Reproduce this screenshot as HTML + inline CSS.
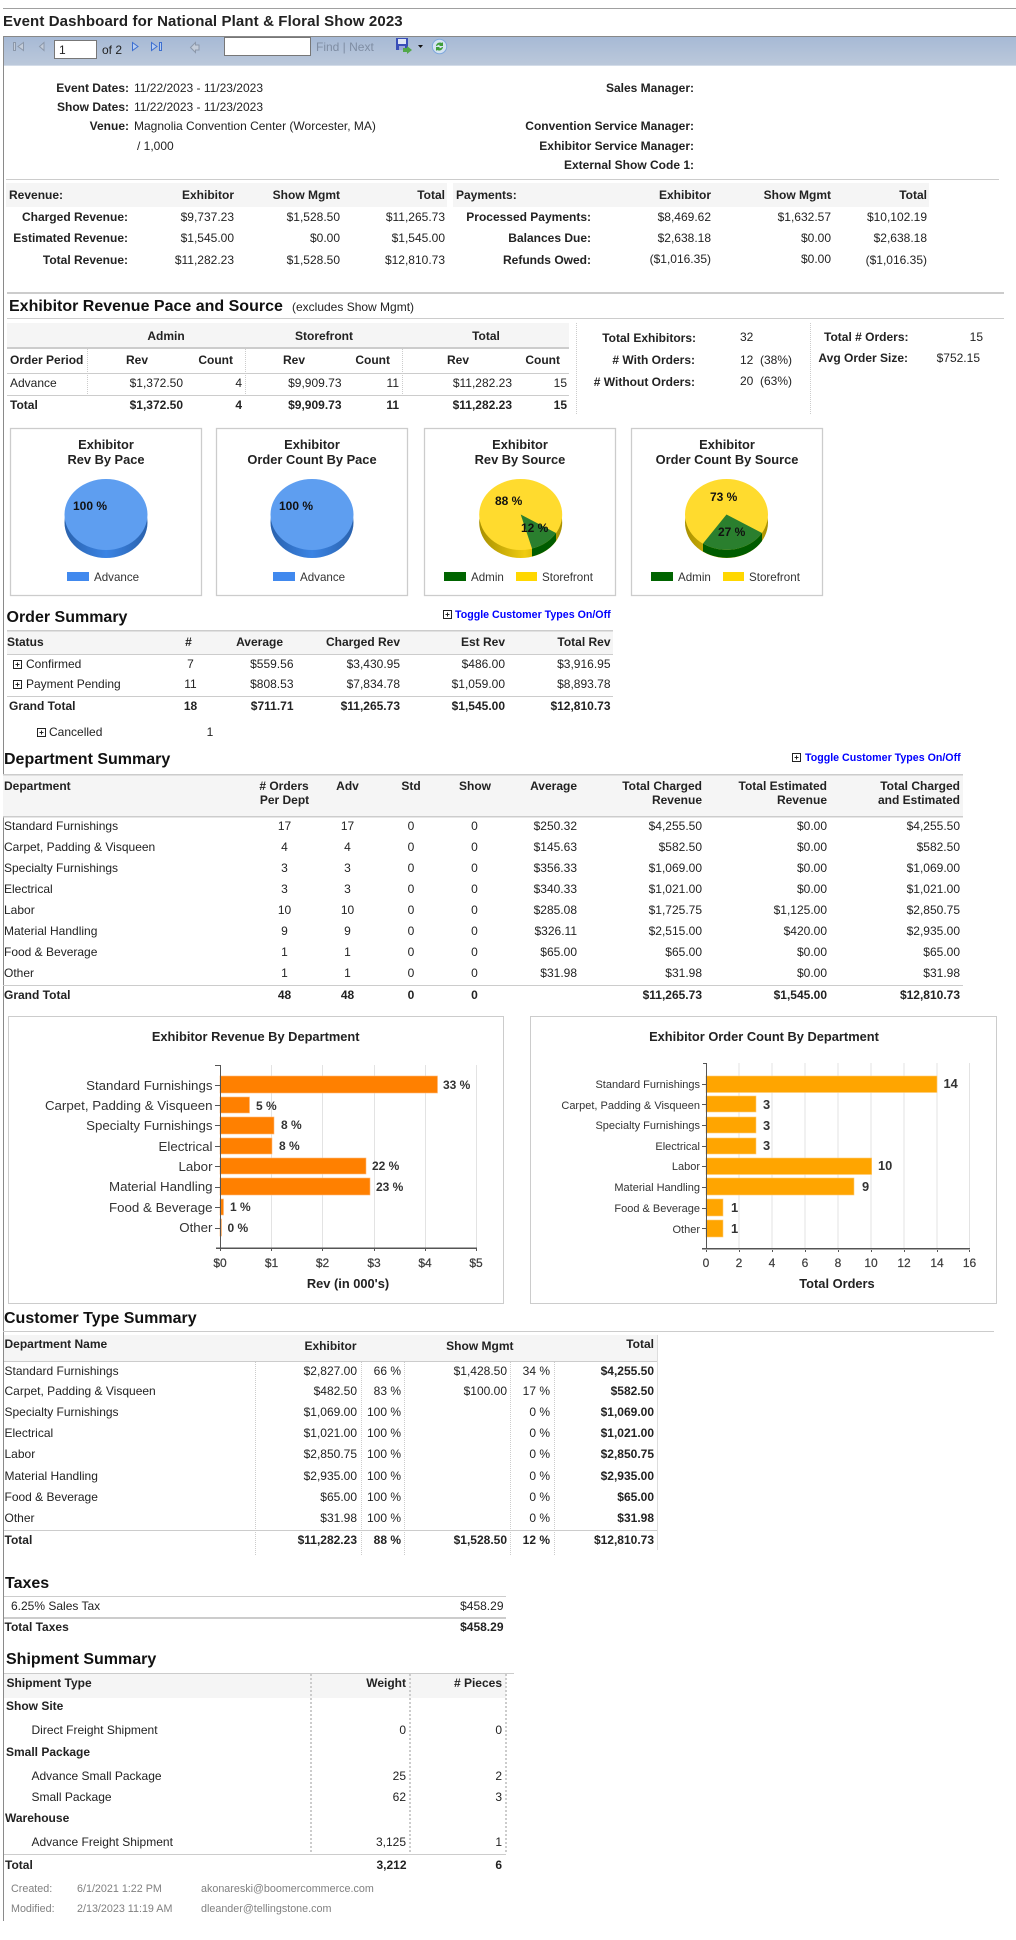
<!DOCTYPE html>
<html><head><meta charset="utf-8"><title>Event Dashboard</title>
<style>
html,body{margin:0;padding:0;background:#fff}
svg{display:block;font-family:"Liberation Sans",Arial,sans-serif;font-size:12px;fill:#222;filter:blur(.25px)}
.b{font-weight:bold}
.h{font-weight:bold;font-size:16px;fill:#111}
.e{text-anchor:end}
.m{text-anchor:middle}
.ct{font-weight:bold;font-size:12.85px;fill:#222}
.lnk{font-weight:bold;font-size:10.65px;fill:#0000ff}
.f{font-size:10.75px;fill:#808080}
.sm{font-size:11px;fill:#333}
.lb{font-size:13.3px;fill:#333}
.lg{fill:#333;font-size:11.6px}
.tk{fill:#3c3c3c;stroke:#3c3c3c;stroke-width:.2px}
.dot{stroke:#ccc;stroke-width:1;stroke-dasharray:1 1;fill:none}
.dot2{stroke:#ccc;stroke-width:2;stroke-dasharray:2 2;fill:none}
.grid{stroke:#e3e3e3;stroke-width:1}
.ax{stroke:#555;stroke-width:1;fill:none}
</style></head><body>
<svg width="1016" height="1940" viewBox="0 0 1016 1940" xmlns="http://www.w3.org/2000/svg">
<defs>
<linearGradient id="tb" x1="0" y1="0" x2="0" y2="1"><stop offset="0" stop-color="#a6b9d5"/><stop offset="1" stop-color="#bcc9db"/></linearGradient>
<linearGradient id="sb" x1="0" y1="0" x2="1" y2="0"><stop offset="0" stop-color="#2a62ad"/><stop offset=".5" stop-color="#3b84e4"/><stop offset="1" stop-color="#2a62ad"/></linearGradient>
<linearGradient id="sy" x1="0" y1="0" x2="1" y2="0"><stop offset="0" stop-color="#a89000"/><stop offset=".55" stop-color="#f0cc10"/><stop offset="1" stop-color="#a89000"/></linearGradient>
</defs>
<rect x="3" y="8" width="1013" height="1" fill="#a0a0a0"/>
<text x="3" y="26" class="b" style="font-size:15px;letter-spacing:.12px" fill="#222">Event Dashboard for National Plant &amp; Floral Show 2023</text>

<!-- toolbar -->
<rect x="3" y="36" width="1013" height="30" fill="url(#tb)"/>
<rect x="3" y="36" width="1013" height="1" fill="#888"/>
<rect x="3" y="65" width="1013" height="1" fill="#d3dce8"/>
<rect x="3" y="36" width="1" height="1885" fill="#8a8a8a"/>
<g fill="#c3ccd9" stroke="#8c98aa" stroke-width="1">
<rect x="13.500" y="42.500" width="2" height="8"/><path d="M23.500 42.500 18 46.500 23.500 50.500Z"/>
<path d="M44 42.500 39.500 46.500 44 50.500Z"/>
<path d="M195.500 42.500 190.500 47.500 195.500 52.500V50H199V45H195.500Z"/>
</g>
<g fill="#b9cff0" stroke="#3d6fd0" stroke-width="1">
<path d="M132.500 42.500 138 46.500 132.500 50.500Z"/><path d="M151.500 42.500 157 46.500 151.500 50.500Z"/><rect x="159.500" y="42.500" width="2" height="8"/>
</g>
<rect x="54.500" y="40.500" width="42" height="18" fill="#fff" stroke="#777"/>
<text x="59" y="54">1</text>
<text x="102" y="54">of 2</text>
<rect x="224.500" y="37.500" width="86" height="18" fill="#fff" stroke="#777"/>
<text x="316" y="51" style="fill:#7f8da3">Find | Next</text>
<rect x="396" y="38" width="12" height="12" fill="#3a4fb8"/><rect x="398" y="39" width="8" height="5" fill="#dfe6f5"/><rect x="399" y="46" width="6" height="4" fill="#9aa6d8"/>
<path d="M403 48h4v-2l5 4-5 4v-2h-4z" fill="#52a84a"/>
<path d="M418 45h5l-2.500 3z" fill="#111"/>
<circle cx="439.500" cy="46.500" r="7.200" fill="#d5e3f2" stroke="#7fa8dc"/>
<path d="M436 46a4 4 0 0 1 6-3l1-1v4h-4l1-1a2.500 2.500 0 0 0-3 1zM443 47a4 4 0 0 1-6 3l-1 1v-4h4l-1 1a2.500 2.500 0 0 0 3-1z" fill="#3f9e3a"/>

<!-- info -->
<g class="b e">
<text x="129" y="92">Event Dates:</text><text x="129" y="111">Show Dates:</text><text x="129" y="130">Venue:</text>
<text x="694" y="92">Sales Manager:</text><text x="694" y="130">Convention Service Manager:</text><text x="694" y="150">Exhibitor Service Manager:</text><text x="694" y="169">External Show Code 1:</text>
</g>
<text x="134" y="92">11/22/2023 - 11/23/2023</text><text x="134" y="111">11/22/2023 - 11/23/2023</text><text x="134" y="130">Magnolia Convention Center (Worcester, MA)</text><text x="137" y="150">/ 1,000</text>
<rect x="6" y="179" width="993" height="1" fill="#ccc"/>

<!-- revenue -->
<rect x="6" y="183" width="441" height="24" fill="#f5f5f5"/><rect x="453" y="183" width="476" height="24" fill="#f5f5f5"/>
<g class="b">
<text x="9" y="199">Revenue:</text><text x="456" y="199">Payments:</text>
<g class="e"><text x="234" y="199">Exhibitor</text><text x="340" y="199">Show Mgmt</text><text x="445" y="199">Total</text><text x="711" y="199">Exhibitor</text><text x="831" y="199">Show Mgmt</text><text x="927" y="199">Total</text>
<text x="128" y="221">Charged Revenue:</text><text x="128" y="242">Estimated Revenue:</text><text x="128" y="264">Total Revenue:</text>
<text x="591" y="221">Processed Payments:</text><text x="591" y="242">Balances Due:</text><text x="591" y="264">Refunds Owed:</text></g>
</g>
<g class="e">
<text x="234" y="221">$9,737.23</text><text x="340" y="221">$1,528.50</text><text x="445" y="221">$11,265.73</text><text x="711" y="221">$8,469.62</text><text x="831" y="221">$1,632.57</text><text x="927" y="221">$10,102.19</text>
<text x="234" y="242">$1,545.00</text><text x="340" y="242">$0.00</text><text x="445" y="242">$1,545.00</text><text x="711" y="242">$2,638.18</text><text x="831" y="242">$0.00</text><text x="927" y="242">$2,638.18</text>
<text x="234" y="264">$11,282.23</text><text x="340" y="264">$1,528.50</text><text x="445" y="264">$12,810.73</text><text x="711" y="263">($1,016.35)</text><text x="831" y="263">$0.00</text><text x="927" y="264">($1,016.35)</text>
</g>

<!-- pace heading -->
<rect x="7" y="292" width="997" height="2" fill="#ccc"/>
<text x="9" y="311" class="h">Exhibitor Revenue Pace and Source</text>
<text x="292" y="311">(excludes Show Mgmt)</text>
<rect x="7" y="318" width="997" height="1" fill="#ccc"/>

<!-- pace table -->
<rect x="7" y="323" width="562" height="24" fill="#f5f5f5"/><rect x="7" y="347" width="562" height="2" fill="#ccc"/>
<rect x="7" y="373" width="562" height="1" fill="#ccc"/><rect x="7" y="395" width="562" height="1" fill="#ccc"/>
<path class="dot" d="M87.500 349V395M245.500 349V395M402.500 349V395M576.500 323V415M810.500 323V415"/>
<g class="b">
<g class="m"><text x="166" y="340">Admin</text><text x="324" y="340">Storefront</text><text x="486" y="340">Total</text></g>
<text x="10" y="364">Order Period</text>
<g class="e"><text x="148" y="364">Rev</text><text x="233" y="364">Count</text><text x="305" y="364">Rev</text><text x="390" y="364">Count</text><text x="469" y="364">Rev</text><text x="560" y="364">Count</text>
<text x="183" y="409">$1,372.50</text><text x="242" y="409">4</text><text x="341.500" y="409">$9,909.73</text><text x="399" y="409">11</text><text x="512" y="409">$11,282.23</text><text x="567" y="409">15</text></g>
<text x="10" y="409">Total</text>
<g class="e"><text x="696" y="342">Total Exhibitors:</text><text x="695" y="364"># With Orders:</text><text x="695" y="386"># Without Orders:</text><text x="908.500" y="341">Total # Orders:</text><text x="908" y="362">Avg Order Size:</text></g>
</g>
<text x="10" y="387">Advance</text>
<g class="e"><text x="183" y="387">$1,372.50</text><text x="242" y="387">4</text><text x="341.500" y="387">$9,909.73</text><text x="399" y="387">11</text><text x="512" y="387">$11,282.23</text><text x="567" y="387">15</text>
<text x="983" y="341">15</text><text x="980" y="362">$752.15</text></g>
<text x="740" y="341">32</text><text x="740" y="364">12&#160;&#160;(38%)</text><text x="740" y="385">20&#160;&#160;(63%)</text>

<!-- pies -->
<g fill="#fff" stroke="#ccc" stroke-width="1.300">
<rect x="10.500" y="428.500" width="191" height="167"/><rect x="216.500" y="428.500" width="191" height="167"/><rect x="424.500" y="428.500" width="191" height="167"/><rect x="631.500" y="428.500" width="191" height="167"/>
</g>
<g class="ct m">
<text x="106" y="449">Exhibitor</text><text x="106" y="464">Rev By Pace</text>
<text x="312" y="449">Exhibitor</text><text x="312" y="464">Order Count By Pace</text>
<text x="520" y="449">Exhibitor</text><text x="520" y="464">Rev By Source</text>
<text x="727" y="449">Exhibitor</text><text x="727" y="464">Order Count By Source</text>
</g>
<ellipse cx="106" cy="522.500" rx="41.500" ry="35.500" fill="url(#sb)"/><ellipse cx="106" cy="514.500" rx="41.500" ry="35.500" fill="#5e9ef0"/>
<ellipse cx="312" cy="522.500" rx="41.500" ry="35.500" fill="url(#sb)"/><ellipse cx="312" cy="514.500" rx="41.500" ry="35.500" fill="#5e9ef0"/>
<ellipse cx="520.700" cy="522.500" rx="41.500" ry="35.500" fill="url(#sy)"/><ellipse cx="520.700" cy="514.500" rx="41.500" ry="35.500" fill="#ffdb2e"/>
<path d="M556 533A41.500 35.500 0 0 1 532 548.500L532 556.500A41.500 35.500 0 0 0 556 541Z" fill="#005c00"/>
<path d="M520.700 514.500L556 533A41.500 35.500 0 0 1 532 548.500Z" fill="#2a7f2e"/>
<ellipse cx="726.500" cy="522.500" rx="41.500" ry="35.500" fill="url(#sy)"/><ellipse cx="726.500" cy="514.500" rx="41.500" ry="35.500" fill="#ffdb2e"/>
<path d="M762 533A41.500 35.500 0 0 1 703 543.500L703 551.500A41.500 35.500 0 0 0 762 541Z" fill="#005c00"/>
<path d="M726.500 514.500L762 533A41.500 35.500 0 0 1 703 543.500Z" fill="#2a7f2e"/>
<g class="b" style="fill:#111">
<text x="73" y="510">100 %</text><text x="279" y="510">100 %</text><text x="495" y="505">88 %</text><text x="521" y="532">12 %</text><text x="710" y="501">73 %</text><text x="718" y="536">27 %</text>
</g>
<rect x="67" y="572" width="22" height="9" fill="#4189ee"/><rect x="273" y="572" width="22" height="9" fill="#4189ee"/>
<rect x="444" y="572" width="22" height="9" fill="#006400"/><rect x="516" y="572" width="21" height="9" fill="#ffd700"/>
<rect x="651" y="572" width="22" height="9" fill="#006400"/><rect x="723" y="572" width="21" height="9" fill="#ffd700"/>
<g class="lg"><text x="94" y="581">Advance</text><text x="300" y="581">Advance</text><text x="471" y="581">Admin</text><text x="542" y="581">Storefront</text><text x="678" y="581">Admin</text><text x="749" y="581">Storefront</text></g>

<!-- order summary -->
<text x="6.500" y="622" class="h">Order Summary</text>
<g fill="#fff" stroke="#222"><rect x="443.500" y="610.500" width="8" height="8"/><path d="M445.500 614.500h4M447.500 612.500v4"/></g>
<text x="455" y="618" class="lnk">Toggle Customer Types On/Off</text>
<rect x="7" y="631" width="606" height="23" fill="#f5f5f5"/><rect x="7" y="630" width="606" height="1.500" fill="#ccc"/><rect x="7" y="654" width="606" height="1" fill="#ccc"/>
<g class="b">
<text x="7" y="646">Status</text><text x="188.500" y="646" class="m">#</text>
<g class="e"><text x="283" y="646">Average</text><text x="400" y="646">Charged Rev</text><text x="505" y="646">Est Rev</text><text x="610.500" y="646">Total Rev</text></g>
</g>
<g fill="#fff" stroke="#222"><rect x="13.500" y="660.500" width="8" height="8"/><path d="M15.500 664.500h4M17.500 662.500v4"/><rect x="13.500" y="680.500" width="8" height="8"/><path d="M15.500 684.500h4M17.500 682.500v4"/><rect x="37.500" y="728.500" width="8" height="8"/><path d="M39.500 732.500h4M41.500 730.500v4"/></g>
<text x="26" y="668">Confirmed</text><text x="26" y="688">Payment Pending</text>
<text x="190.500" y="668" class="m">7</text><text x="190.500" y="688" class="m">11</text>
<g class="e"><text x="293.500" y="668">$559.56</text><text x="400" y="668">$3,430.95</text><text x="505" y="668">$486.00</text><text x="610.500" y="668">$3,916.95</text>
<text x="293.500" y="688">$808.53</text><text x="400" y="688">$7,834.78</text><text x="505" y="688">$1,059.00</text><text x="610.500" y="688">$8,893.78</text></g>
<rect x="7" y="696" width="606" height="1" fill="#ccc"/>
<g class="b"><text x="9" y="710">Grand Total</text><text x="190.500" y="710" class="m">18</text>
<g class="e"><text x="293.500" y="710">$711.71</text><text x="400" y="710">$11,265.73</text><text x="505" y="710">$1,545.00</text><text x="610.500" y="710">$12,810.73</text></g></g>
<text x="49" y="736">Cancelled</text><text x="210" y="736" class="m">1</text>

<!-- dept summary -->
<text x="4" y="764" class="h">Department Summary</text>
<g fill="#fff" stroke="#222"><rect x="792.500" y="753.500" width="8" height="8"/><path d="M794.500 757.500h4M796.500 755.500v4"/></g>
<text x="805" y="761" class="lnk">Toggle Customer Types On/Off</text>
<rect x="3" y="775" width="960" height="41" fill="#f5f5f5"/><rect x="3" y="774" width="960" height="1.500" fill="#ccc"/><rect x="3" y="816" width="960" height="1.500" fill="#ccc"/>
<g class="b">
<text x="4" y="790">Department</text>
<g class="m"><text x="284" y="790"># Orders</text><text x="284.500" y="804">Per Dept</text><text x="347.500" y="790">Adv</text><text x="411" y="790">Std</text><text x="475" y="790">Show</text></g>
<g class="e"><text x="577" y="790">Average</text><text x="702" y="790">Total Charged</text><text x="702" y="804">Revenue</text><text x="827" y="790">Total Estimated</text><text x="827" y="804">Revenue</text><text x="960" y="790">Total Charged</text><text x="960" y="804">and Estimated</text></g>
</g>
<g>
<text x="4" y="830">Standard Furnishings</text><text x="4" y="851">Carpet, Padding &amp; Visqueen</text><text x="4" y="872">Specialty Furnishings</text><text x="4" y="893">Electrical</text><text x="4" y="914">Labor</text><text x="4" y="935">Material Handling</text><text x="4" y="956">Food &amp; Beverage</text><text x="4" y="977">Other</text>
</g>
<g class="m">
<text x="284.500" y="830">17</text><text x="347.500" y="830">17</text><text x="411" y="830">0</text><text x="474.500" y="830">0</text>
<text x="284.500" y="851">4</text><text x="347.500" y="851">4</text><text x="411" y="851">0</text><text x="474.500" y="851">0</text>
<text x="284.500" y="872">3</text><text x="347.500" y="872">3</text><text x="411" y="872">0</text><text x="474.500" y="872">0</text>
<text x="284.500" y="893">3</text><text x="347.500" y="893">3</text><text x="411" y="893">0</text><text x="474.500" y="893">0</text>
<text x="284.500" y="914">10</text><text x="347.500" y="914">10</text><text x="411" y="914">0</text><text x="474.500" y="914">0</text>
<text x="284.500" y="935">9</text><text x="347.500" y="935">9</text><text x="411" y="935">0</text><text x="474.500" y="935">0</text>
<text x="284.500" y="956">1</text><text x="347.500" y="956">1</text><text x="411" y="956">0</text><text x="474.500" y="956">0</text>
<text x="284.500" y="977">1</text><text x="347.500" y="977">1</text><text x="411" y="977">0</text><text x="474.500" y="977">0</text>
</g>
<g class="e">
<text x="577" y="830">$250.32</text><text x="702" y="830">$4,255.50</text><text x="827" y="830">$0.00</text><text x="960" y="830">$4,255.50</text>
<text x="577" y="851">$145.63</text><text x="702" y="851">$582.50</text><text x="827" y="851">$0.00</text><text x="960" y="851">$582.50</text>
<text x="577" y="872">$356.33</text><text x="702" y="872">$1,069.00</text><text x="827" y="872">$0.00</text><text x="960" y="872">$1,069.00</text>
<text x="577" y="893">$340.33</text><text x="702" y="893">$1,021.00</text><text x="827" y="893">$0.00</text><text x="960" y="893">$1,021.00</text>
<text x="577" y="914">$285.08</text><text x="702" y="914">$1,725.75</text><text x="827" y="914">$1,125.00</text><text x="960" y="914">$2,850.75</text>
<text x="577" y="935">$326.11</text><text x="702" y="935">$2,515.00</text><text x="827" y="935">$420.00</text><text x="960" y="935">$2,935.00</text>
<text x="577" y="956">$65.00</text><text x="702" y="956">$65.00</text><text x="827" y="956">$0.00</text><text x="960" y="956">$65.00</text>
<text x="577" y="977">$31.98</text><text x="702" y="977">$31.98</text><text x="827" y="977">$0.00</text><text x="960" y="977">$31.98</text>
</g>
<rect x="3" y="985" width="960" height="1" fill="#ccc"/>
<g class="b"><text x="4" y="999">Grand Total</text>
<g class="m"><text x="284.500" y="999">48</text><text x="347.500" y="999">48</text><text x="411" y="999">0</text><text x="474.500" y="999">0</text></g>
<g class="e"><text x="702" y="999">$11,265.73</text><text x="827" y="999">$1,545.00</text><text x="960" y="999">$12,810.73</text></g></g>

<!-- bar chart 1 -->
<rect x="8.500" y="1016.500" width="495" height="287" fill="#fff" stroke="#ccc"/>
<rect x="530.500" y="1016.500" width="466" height="287" fill="#fff" stroke="#ccc"/>
<text x="255.700" y="1041" class="ct m">Exhibitor Revenue By Department</text>
<text x="764" y="1041" class="ct m">Exhibitor Order Count By Department</text>
<path class="grid" d="M271.500 1065V1248M322.500 1065V1248M374.500 1065V1248M425.500 1065V1248M476.500 1065V1248"/>
<g fill="#ff8000" stroke="#ffb877" stroke-width=".6">
<rect x="220" y="1076" width="217.500" height="17"/><rect x="220" y="1097" width="29.500" height="16"/><rect x="220" y="1117" width="54" height="17"/><rect x="220" y="1138" width="52" height="16"/><rect x="220" y="1158" width="146" height="16"/><rect x="220" y="1178" width="150" height="17"/><rect x="220" y="1199" width="3.500" height="16"/><rect x="220" y="1219" width="1.500" height="17"/>
</g>
<path class="ax" d="M215 1065.500H220.500V1248M215 1085.500H220M215 1105.500H220M215 1125.500H220M215 1146.500H220M215 1166.500H220M215 1187.500H220M215 1207.500H220M215 1228.500H220"/>
<rect x="216" y="1247.500" width="261" height="1.500" fill="#555"/>
<path class="ax" d="M220.500 1249V1251M271.500 1249V1251M322.500 1249V1251M374.500 1249V1251M425.500 1249V1251M476.500 1249V1251"/>
<g class="lb e">
<text x="212.500" y="1090">Standard Furnishings</text><text x="212.500" y="1110">Carpet, Padding &amp; Visqueen</text><text x="212.500" y="1130">Specialty Furnishings</text><text x="212.500" y="1151">Electrical</text><text x="212.500" y="1171">Labor</text><text x="212.500" y="1191">Material Handling</text><text x="212.500" y="1212">Food &amp; Beverage</text><text x="212.500" y="1232">Other</text>
</g>
<g class="b" style="fill:#333">
<text x="443" y="1089">33 %</text><text x="256" y="1110">5 %</text><text x="281" y="1129">8 %</text><text x="279" y="1150">8 %</text><text x="372" y="1170">22 %</text><text x="376" y="1191">23 %</text><text x="230" y="1211">1 %</text><text x="227.500" y="1232">0 %</text>
</g>
<g class="tk m">
<text x="220" y="1267">$0</text><text x="271.500" y="1267">$1</text><text x="322.500" y="1267">$2</text><text x="374" y="1267">$3</text><text x="425" y="1267">$4</text><text x="476" y="1267">$5</text>
</g>
<text x="348" y="1288" class="ct m">Rev (in 000's)</text>

<!-- bar chart 2 -->
<path class="grid" d="M739 1063V1248M772 1063V1248M805 1063V1248M838 1063V1248M871 1063V1248M904 1063V1248M937 1063V1248M969.500 1063V1248"/>
<g fill="#ffa500" stroke="#ffcc77" stroke-width=".6">
<rect x="706" y="1076" width="231" height="16.500"/><rect x="706" y="1096" width="50" height="16"/><rect x="706" y="1117" width="50" height="16"/><rect x="706" y="1138" width="50" height="16"/><rect x="706" y="1158" width="165.700" height="16.500"/><rect x="706" y="1178" width="148" height="17"/><rect x="706" y="1199" width="17" height="17"/><rect x="706" y="1220" width="17" height="17"/>
</g>
<path class="ax" d="M703 1063.500H706.500V1248M702 1084.500H706M702 1104.500H706M702 1125.500H706M702 1146.500H706M702 1166.500H706M702 1187.500H706M702 1208.500H706M702 1228.500H706"/>
<rect x="702" y="1248" width="268" height="1.500" fill="#555"/>
<path class="ax" d="M706.500 1250V1252M739.500 1250V1252M772.500 1250V1252M805.500 1250V1252M838.500 1250V1252M871.500 1250V1252M904.500 1250V1252M937.500 1250V1252M969.500 1250V1252"/>
<g class="sm e">
<text x="700" y="1088">Standard Furnishings</text><text x="700" y="1109">Carpet, Padding &amp; Visqueen</text><text x="700" y="1129">Specialty Furnishings</text><text x="700" y="1150">Electrical</text><text x="700" y="1170">Labor</text><text x="700" y="1191">Material Handling</text><text x="700" y="1212">Food &amp; Beverage</text><text x="700" y="1233">Other</text>
</g>
<g class="ct" style="fill:#333">
<text x="943.500" y="1088">14</text><text x="763" y="1109">3</text><text x="763" y="1130">3</text><text x="763" y="1150">3</text><text x="878" y="1170">10</text><text x="862" y="1191">9</text><text x="731" y="1212">1</text><text x="731" y="1233">1</text>
</g>
<g class="tk m">
<text x="706" y="1267">0</text><text x="739" y="1267">2</text><text x="772" y="1267">4</text><text x="805" y="1267">6</text><text x="838" y="1267">8</text><text x="871" y="1267">10</text><text x="904" y="1267">12</text><text x="937" y="1267">14</text><text x="969.500" y="1267">16</text>
</g>
<text x="837" y="1288" class="ct m">Total Orders</text>

<!-- customer type -->
<text x="4" y="1323" class="h">Customer Type Summary</text>
<rect x="3" y="1331" width="991" height="1" fill="#ccc"/>
<rect x="4" y="1335" width="653.500" height="26" fill="#f5f5f5"/><rect x="4" y="1361" width="653.500" height="1" fill="#ccc"/><rect x="4" y="1530" width="653.500" height="1" fill="#ccc"/>
<path class="dot" d="M255.500 1362V1556M361.500 1362V1556M404.500 1362V1556M510.500 1362V1556M554.500 1362V1556"/>
<rect x="657" y="1335" width="1" height="215" fill="#ddd"/>
<g class="b"><text x="4.500" y="1348">Department Name</text>
<g class="e"><text x="356.500" y="1350">Exhibitor</text><text x="513.500" y="1350">Show Mgmt</text><text x="654" y="1348">Total</text></g></g>
<text x="4.500" y="1375">Standard Furnishings</text><text x="4.500" y="1395">Carpet, Padding &amp; Visqueen</text><text x="4.500" y="1416">Specialty Furnishings</text><text x="4.500" y="1437">Electrical</text><text x="4.500" y="1458">Labor</text><text x="4.500" y="1480">Material Handling</text><text x="4.500" y="1501">Food &amp; Beverage</text><text x="4.500" y="1522">Other</text>
<g class="e">
<text x="357" y="1375">$2,827.00</text><text x="401" y="1375">66 %</text><text x="507" y="1375">$1,428.50</text><text x="550" y="1375">34 %</text>
<text x="357" y="1395">$482.50</text><text x="401" y="1395">83 %</text><text x="507" y="1395">$100.00</text><text x="550" y="1395">17 %</text>
<text x="357" y="1416">$1,069.00</text><text x="401" y="1416">100 %</text><text x="550" y="1416">0 %</text>
<text x="357" y="1437">$1,021.00</text><text x="401" y="1437">100 %</text><text x="550" y="1437">0 %</text>
<text x="357" y="1458">$2,850.75</text><text x="401" y="1458">100 %</text><text x="550" y="1458">0 %</text>
<text x="357" y="1480">$2,935.00</text><text x="401" y="1480">100 %</text><text x="550" y="1480">0 %</text>
<text x="357" y="1501">$65.00</text><text x="401" y="1501">100 %</text><text x="550" y="1501">0 %</text>
<text x="357" y="1522">$31.98</text><text x="401" y="1522">100 %</text><text x="550" y="1522">0 %</text>
</g>
<g class="b e">
<text x="654" y="1375">$4,255.50</text><text x="654" y="1395">$582.50</text><text x="654" y="1416">$1,069.00</text><text x="654" y="1437">$1,021.00</text><text x="654" y="1458">$2,850.75</text><text x="654" y="1480">$2,935.00</text><text x="654" y="1501">$65.00</text><text x="654" y="1522">$31.98</text>
<text x="357" y="1544">$11,282.23</text><text x="401" y="1544">88 %</text><text x="507" y="1544">$1,528.50</text><text x="550" y="1544">12 %</text><text x="654" y="1544">$12,810.73</text>
</g>
<text x="4.500" y="1544" class="b">Total</text>

<!-- taxes -->
<text x="5" y="1588" class="h">Taxes</text>
<rect x="4" y="1596" width="502" height="1" fill="#ccc"/>
<text x="11" y="1610">6.25% Sales Tax</text><text x="503.500" y="1610" class="e">$458.29</text>
<rect x="4" y="1617" width="502" height="2" fill="#ccc"/>
<text x="4.500" y="1631" class="b">Total Taxes</text><text x="503.500" y="1631" class="b e">$458.29</text>

<!-- shipment -->
<text x="6" y="1664" class="h">Shipment Summary</text>
<rect x="4" y="1673" width="510" height="1" fill="#ccc"/>
<rect x="4" y="1674" width="502" height="24" fill="#f5f5f5"/>
<path class="dot2" d="M311 1674V1854M410 1674V1854M506 1674V1854"/>
<rect x="4" y="1854" width="502" height="1" fill="#ccc"/>
<g class="b"><text x="6.500" y="1687">Shipment Type</text><text x="406" y="1687" class="e">Weight</text><text x="502" y="1687" class="e"># Pieces</text>
<text x="6" y="1710">Show Site</text><text x="6" y="1756">Small Package</text><text x="5" y="1822">Warehouse</text>
<text x="5" y="1869">Total</text><text x="406.500" y="1869" class="e">3,212</text><text x="502" y="1869" class="e">6</text></g>
<text x="31.500" y="1734">Direct Freight Shipment</text><text x="31.500" y="1780">Advance Small Package</text><text x="31.500" y="1801">Small Package</text><text x="31.500" y="1846">Advance Freight Shipment</text>
<g class="e"><text x="406" y="1734">0</text><text x="502" y="1734">0</text><text x="406" y="1780">25</text><text x="502" y="1780">2</text><text x="406" y="1801">62</text><text x="502" y="1801">3</text><text x="406" y="1846">3,125</text><text x="502" y="1846">1</text></g>

<!-- footer -->
<g class="f">
<text x="11" y="1892">Created:</text><text x="77" y="1892">6/1/2021 1:22 PM</text><text x="201" y="1892">akonareski@boomercommerce.com</text>
<text x="11" y="1912">Modified:</text><text x="77" y="1912">2/13/2023 11:19 AM</text><text x="201" y="1912">dleander@tellingstone.com</text>
</g>
</svg>
</body></html>
